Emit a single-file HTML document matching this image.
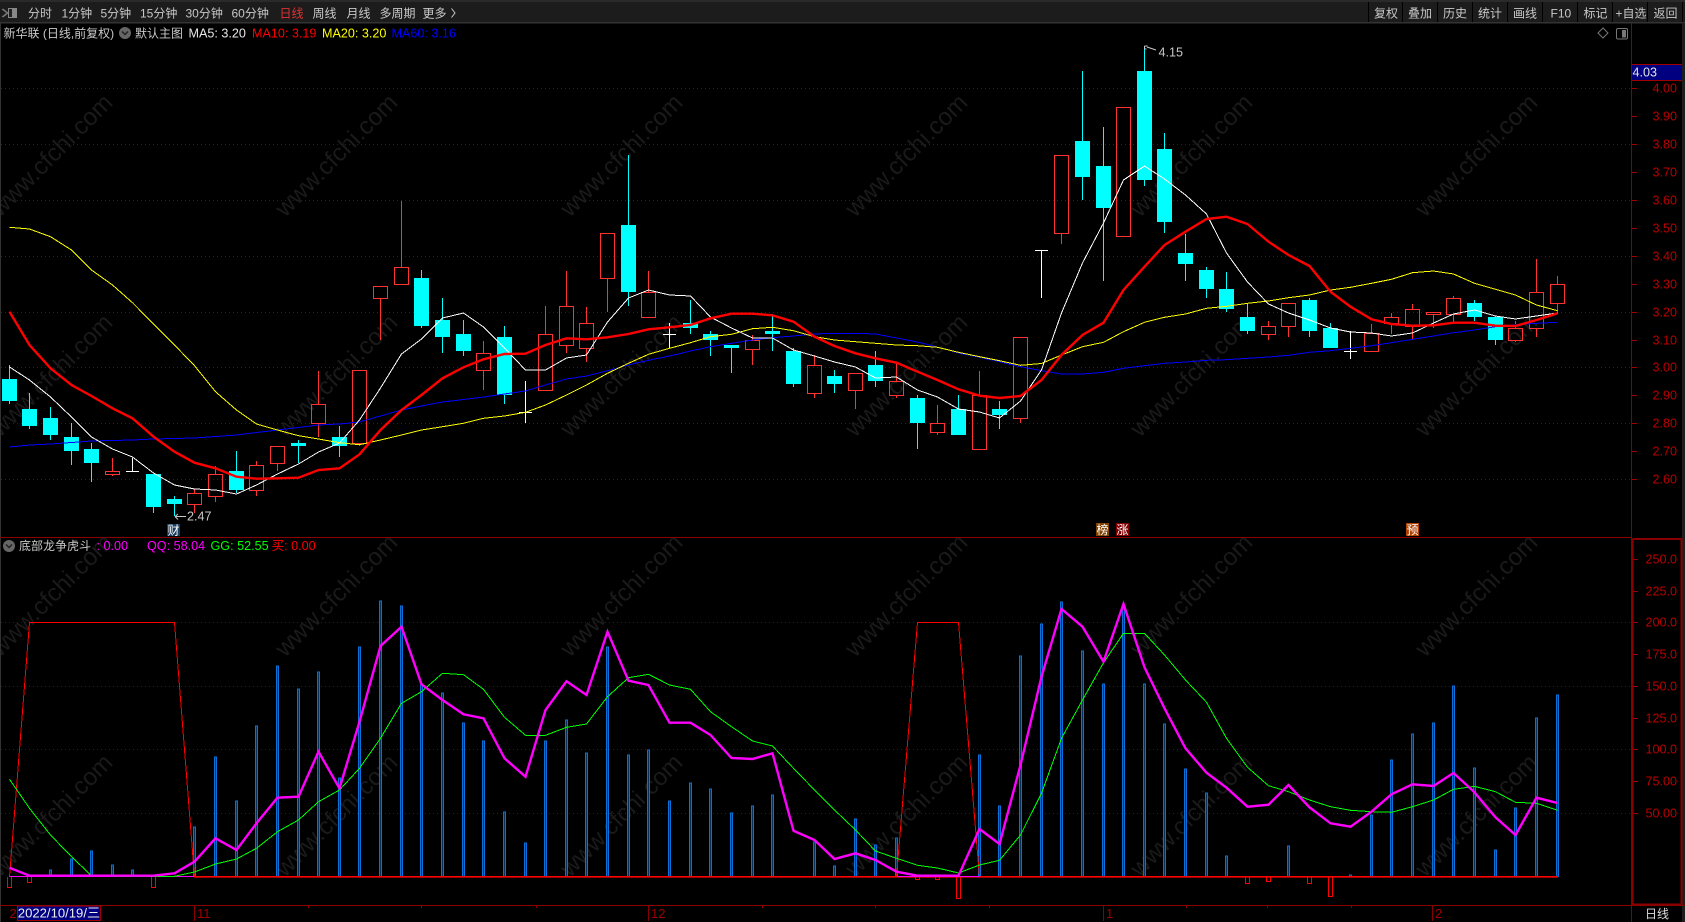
<!DOCTYPE html>
<html lang="zh"><head><meta charset="utf-8"><title>新华联</title>
<style>
html,body{margin:0;padding:0;background:#000;width:1685px;height:922px;overflow:hidden}
svg{display:block;position:absolute;left:0;top:0}
text{font-family:"Liberation Sans","Noto Sans CJK SC",sans-serif;font-size:12.6px;white-space:pre}
.t{fill:#c8c8c8;font-size:12px}
.p{fill:#b80000;font-size:12.6px;text-anchor:end}
.b{fill:#a00000;font-size:13px}
.wm text{fill:#1a1a1a;font-size:24.4px}
.g{stroke:#7a0000;stroke-width:1;stroke-dasharray:1 3;fill:none}
.c{shape-rendering:crispEdges;fill:none}
</style></head><body>
<svg width="1685" height="922" viewBox="0 0 1685 922" xmlns="http://www.w3.org/2000/svg">
<rect width="1685" height="922" fill="#000"/>
<!-- watermarks -->
<g class="wm">
<text transform="translate(0,218) rotate(-45)">www.cfchi.com</text><text transform="translate(285,218) rotate(-45)">www.cfchi.com</text><text transform="translate(570,218) rotate(-45)">www.cfchi.com</text><text transform="translate(855,218) rotate(-45)">www.cfchi.com</text><text transform="translate(1140,218) rotate(-45)">www.cfchi.com</text><text transform="translate(1425,218) rotate(-45)">www.cfchi.com</text>
<text transform="translate(0,438) rotate(-45)">www.cfchi.com</text><text transform="translate(285,438) rotate(-45)">www.cfchi.com</text><text transform="translate(570,438) rotate(-45)">www.cfchi.com</text><text transform="translate(855,438) rotate(-45)">www.cfchi.com</text><text transform="translate(1140,438) rotate(-45)">www.cfchi.com</text><text transform="translate(1425,438) rotate(-45)">www.cfchi.com</text>
<text transform="translate(0,658) rotate(-45)">www.cfchi.com</text><text transform="translate(285,658) rotate(-45)">www.cfchi.com</text><text transform="translate(570,658) rotate(-45)">www.cfchi.com</text><text transform="translate(855,658) rotate(-45)">www.cfchi.com</text><text transform="translate(1140,658) rotate(-45)">www.cfchi.com</text><text transform="translate(1425,658) rotate(-45)">www.cfchi.com</text>
<text transform="translate(0,878) rotate(-45)">www.cfchi.com</text><text transform="translate(285,878) rotate(-45)">www.cfchi.com</text><text transform="translate(570,878) rotate(-45)">www.cfchi.com</text><text transform="translate(855,878) rotate(-45)">www.cfchi.com</text><text transform="translate(1140,878) rotate(-45)">www.cfchi.com</text><text transform="translate(1425,878) rotate(-45)">www.cfchi.com</text>
</g>
<!-- grid -->
<path class="g" d="M1 88.5H1631M1 144.5H1631M1 200.5H1631M1 256.5H1631M1 312.5H1631M1 367.5H1631M1 423.5H1631M1 479.5H1631M1 622.5H1631M1 686.5H1631M1 749.5H1631M1 813.5H1631"/>
<!-- toolbar -->
<rect width="1685" height="23" fill="#1c1c1c"/>
<rect width="1685" height="2" fill="#2a2a2a"/>
<rect y="22" width="1685" height="1.5" fill="#333"/>
<rect x="0" y="23" width="1" height="899" fill="#333"/>
<rect x="1682" y="23" width="3" height="899" fill="#1e1e1e"/>
<path d="M2 9l5 4-5 4M3 9l5 4-5 4" stroke="#777" fill="none"/>
<rect x="8.5" y="8.5" width="8" height="9" fill="#222" stroke="#888"/><rect x="12" y="9" width="4" height="8" fill="#888"/>
<path d="M1368.5 2V22M1402.5 2V22M1437.5 2V22M1472.5 2V22M1507.5 2V22M1542.5 2V22M1577.5 2V22M1612.5 2V22M1647.5 2V22M1682.5 2V22" stroke="#000"/>
<text class="t" x="28" y="17.5">分时</text><text class="t" x="61.5" y="17.5">1分钟</text><text class="t" x="100.5" y="17.5">5分钟</text><text class="t" x="140" y="17.5">15分钟</text><text class="t" x="185.5" y="17.5">30分钟</text><text class="t" x="231.5" y="17.5">60分钟</text><text class="t" x="279.5" y="17.5" style="fill:#e03232">日线</text><text class="t" x="312.5" y="17.5">周线</text><text class="t" x="346.5" y="17.5">月线</text><text class="t" x="379.5" y="17.5">多周期</text><text class="t" x="422.5" y="17.5">更多</text>
<path d="M451.5 8.5l3.5 4.5-3.5 4.5" stroke="#c8c8c8" fill="none"/>
<text class="t" x="1374" y="17.5">复权</text><text class="t" x="1408" y="17.5">叠加</text><text class="t" x="1443" y="17.5">历史</text><text class="t" x="1478" y="17.5">统计</text><text class="t" x="1513" y="17.5">画线</text><text class="t" x="1550.5" y="17.5">F10</text><text class="t" x="1583.5" y="17.5">标记</text><text class="t" x="1615.5" y="17.5">+自选</text><text class="t" x="1653.5" y="17.5">返回</text>
<!-- info bar -->
<text class="t" x="3.5" y="37.5">新华联 (日线,前复权)</text>
<circle cx="125" cy="33" r="6" fill="#666"/><path d="M122 31.5l3 3 3-3" stroke="#222" stroke-width="1.5" fill="none"/>
<text class="t" x="135" y="37.5">默认主图</text>
<text x="188.5" y="37.5" fill="#e8e8e8">MA5: 3.20</text><text x="252" y="37.5" fill="#ff0000">MA10: 3.19</text><text x="322" y="37.5" fill="#ffff00">MA20: 3.20</text><text x="391.5" y="37.5" fill="#0000ff">MA60: 3.16</text>
<path d="M1603 28l5 5-5 5-5-5z" stroke="#777" fill="none"/>
<rect x="1616.5" y="28.5" width="11" height="10.5" rx="1.5" stroke="#777" fill="none"/><rect x="1622" y="30" width="4" height="7.5" fill="#777"/>
<!-- frame lines -->
<path d="M1631.5 23V922M0 537.5H1632M0 905.5H1685" stroke="#8a0000" fill="none"/>
<path d="M1632.5 539V904.5H1681.5V539H1632.5" stroke="#8a0000" stroke-width="2" fill="none"/>
<!-- price axis -->
<rect x="1632" y="64" width="50" height="16.5" fill="#000080"/><path d="M1632 64.5H1682M1632 80.5H1682" stroke="#a00000"/>
<text x="1632.5" y="76.5" fill="#e6e6e6" font-size="12.6">4.03</text>
<path d="M1632 88.5h5M1632 116.5h5M1632 144.5h5M1632 172.5h5M1632 200.5h5M1632 228.5h5M1632 256.5h5M1632 284.5h5M1632 312.5h5M1632 340.5h5M1632 367.5h5M1632 395.5h5M1632 423.5h5M1632 451.5h5M1632 479.5h5M1633 559.5h5M1633 591.5h5M1633 622.5h5M1633 654.5h5M1633 686.5h5M1633 718.5h5M1633 749.5h5M1633 781.5h5M1633 813.5h5" stroke="#a00000"/>
<g>
<text class="p" x="1677" y="92.5">4.00</text><text class="p" x="1677" y="120.5">3.90</text><text class="p" x="1677" y="148.5">3.80</text><text class="p" x="1677" y="176.5">3.70</text><text class="p" x="1677" y="204.5">3.60</text><text class="p" x="1677" y="232.5">3.50</text><text class="p" x="1677" y="260.5">3.40</text><text class="p" x="1677" y="288.5">3.30</text><text class="p" x="1677" y="316.5">3.20</text><text class="p" x="1677" y="344.5">3.10</text><text class="p" x="1677" y="371.5">3.00</text><text class="p" x="1677" y="399.5">2.90</text><text class="p" x="1677" y="427.5">2.80</text><text class="p" x="1677" y="455.5">2.70</text><text class="p" x="1677" y="483.5">2.60</text>
<text class="p" x="1677" y="563.5">250.0</text><text class="p" x="1677" y="595.5">225.0</text><text class="p" x="1677" y="626.5">200.0</text><text class="p" x="1677" y="658.5">175.0</text><text class="p" x="1677" y="690.5">150.0</text><text class="p" x="1677" y="722.5">125.0</text><text class="p" x="1677" y="753.5">100.0</text><text class="p" x="1677" y="785.5">75.00</text><text class="p" x="1677" y="817.5">50.00</text>
</g>
<!-- cyan wicks and bodies -->
<path stroke="#00ffff" fill="none" d="M9.5 365V404M29.5 393V429M50.5 407V440M71.5 423V465M91.5 443V482M153.5 474V513M174.5 496V516M236.5 451V493M298.5 440V463M339.5 426V457M421.5 270V328M442.5 298V353M463.5 320V356M504.5 326V404M628.5 155V306M690.5 300V334M710.5 331V356M731.5 345V373M772.5 314V351M793.5 348V387M834.5 370V393M875.5 351V387M917.5 395V449M958.5 395V435M999.5 401V429M1082.5 71V200M1103.5 127V281M1144.5 46V186M1164.5 133V233M1185.5 234V281M1206.5 267V298M1226.5 272V312M1247.5 303V334M1309.5 298V337M1330.5 323V348M1474.5 300V321M1495.5 316V345"/>
<path fill="#00ffff" d="M2 379h15V401h-15zM22 409h15V426h-15zM43 418h15V435h-15zM64 437h15V451h-15zM84 449h15V463h-15zM146 474h15V507h-15zM167 499h15V504h-15zM229 471h15V490h-15zM291 443h15V446h-15zM332 437h15V446h-15zM414 278h15V326h-15zM435 320h15V337h-15zM456 334h15V351h-15zM497 337h15V395h-15zM621 225h15V292h-15zM683 323h15V328h-15zM703 334h15V340h-15zM724 345h15V348h-15zM765 331h15V334h-15zM786 351h15V384h-15zM827 376h15V384h-15zM868 365h15V381h-15zM910 398h15V423h-15zM951 409h15V435h-15zM992 409h15V415h-15zM1075 141h15V177h-15zM1096 166h15V208h-15zM1137 71h15V180h-15zM1157 149h15V222h-15zM1178 253h15V264h-15zM1199 270h15V289h-15zM1219 289h15V309h-15zM1240 317h15V331h-15zM1302 300h15V331h-15zM1323 328h15V348h-15zM1467 303h15V317h-15zM1488 317h15V340h-15z"/>
<!-- red candles -->
<path stroke="#ff3232" fill="none" d="M112.5 458V471.5M112.5 474.5V476M105.5 471.5h14V474.5h-14zM194.5 489V493.5M194.5 504.5V513M187.5 493.5h14V504.5h-14zM215.5 466V474.5M215.5 496.5V502M208.5 474.5h14V496.5h-14zM256.5 461V465.5M256.5 490.5V496M249.5 465.5h14V490.5h-14zM277.5 463.5V471M270.5 446.5h14V463.5h-14zM318.5 371V404.5M318.5 423.5V437M311.5 404.5h14V423.5h-14zM359.5 443.5V446M352.5 370.5h14V443.5h-14zM380.5 298.5V340M373.5 286.5h14V298.5h-14zM401.5 201V267.5M394.5 267.5h14V284.5h-14zM483.5 341V353.5M483.5 370.5V390M476.5 353.5h14V370.5h-14zM545.5 306V334.5M538.5 334.5h14V390.5h-14zM566.5 271V306.5M566.5 345.5V353M559.5 306.5h14V345.5h-14zM586.5 307V323.5M586.5 348.5V362M579.5 323.5h14V348.5h-14zM607.5 278.5V312M600.5 233.5h14V278.5h-14zM648.5 271V292.5M641.5 292.5h14V317.5h-14zM752.5 335V340.5M752.5 349.5V365M745.5 340.5h14V349.5h-14zM814.5 355V365.5M814.5 393.5V398M807.5 365.5h14V393.5h-14zM855.5 390.5V409M848.5 373.5h14V390.5h-14zM896.5 364V381.5M896.5 395.5V398M889.5 381.5h14V395.5h-14zM937.5 405V423.5M937.5 432.5V435M930.5 423.5h14V432.5h-14zM979.5 371V395.5M972.5 395.5h14V449.5h-14zM1020.5 418.5V423M1013.5 337.5h14V418.5h-14zM1061.5 233.5V244M1054.5 155.5h14V233.5h-14zM1116.5 107.5h14V236.5h-14zM1268.5 321V326.5M1268.5 334.5V340M1261.5 326.5h14V334.5h-14zM1288.5 326.5V337M1281.5 303.5h14V326.5h-14zM1371.5 324V333.5M1364.5 333.5h14V351.5h-14zM1391.5 313V317.5M1391.5 323.5V334M1384.5 317.5h14V323.5h-14zM1412.5 304V309.5M1412.5 326.5V340M1405.5 309.5h14V326.5h-14zM1433.5 314.5V328M1426.5 312.5h14V314.5h-14zM1453.5 296V298.5M1453.5 314.5V323M1446.5 298.5h14V314.5h-14zM1515.5 321V328.5M1515.5 340.5V342M1508.5 328.5h14V340.5h-14zM1536.5 259V292.5M1536.5 328.5V337M1529.5 292.5h14V328.5h-14zM1557.5 276V284.5M1557.5 303.5V314M1550.5 284.5h14V303.5h-14z"/>
<!-- white doji -->
<path stroke="#fff" fill="none" d="M132.5 458V472M126 471.5h13M525.5 381V423M519 412.5h13M669.5 323V348M663 334.5h13M1041.5 250V298M1035 250.5h13M1350.5 331V359M1344 351.5h13"/>
<!-- MA lines -->
<polyline class="c" stroke="#0000ff" stroke-width="1" points="9.5,447 29.5,445 50.5,444 71.5,442.5 91.5,441 112.5,440.5 132.5,440 153.5,439 174.5,438.5 194.5,438 215.5,436.5 236.5,435 256.5,432.5 277.5,430 298.5,427.5 318.5,425 339.5,424 359.5,422 380.5,416 401.5,410 421.5,406 442.5,402 463.5,399.5 483.5,397 504.5,394 525.5,391 545.5,385 566.5,379 586.5,376 607.5,370.7 628.5,365 648.5,360.3 669.5,356 690.5,351 710.5,346.7 731.5,343.3 752.5,340 772.5,337.7 793.5,336 814.5,334 834.5,333.3 855.5,333.3 875.5,334 896.5,338 917.5,342 937.5,347 958.5,353 979.5,357.3 999.5,361.7 1020.5,366.7 1041.5,370.7 1061.5,374 1082.5,374 1103.5,372.3 1123.5,368.3 1144.5,365.7 1164.5,363.3 1185.5,362 1206.5,360.3 1226.5,359.7 1247.5,358.3 1268.5,357 1288.5,355.3 1309.5,352.3 1330.5,350.7 1350.5,348.3 1371.5,345.7 1391.5,342.7 1412.5,339.3 1433.5,336 1453.5,332.7 1474.5,330 1495.5,326.7 1515.5,324.7 1536.5,323.3 1557.5,322.3"/>
<polyline class="c" stroke="#ffff00" stroke-width="1" points="9.5,227.3 29.5,229 50.5,236.7 71.5,250 91.5,270 112.5,285 132.5,302.7 153.5,324 174.5,345 194.5,365.7 215.5,391.7 236.5,410 256.5,424 277.5,430 298.5,435.7 318.5,439 339.5,442.7 359.5,444.7 380.5,440 401.5,435 421.5,430 442.5,426.7 463.5,423.3 483.5,418.3 504.5,416 525.5,412.3 545.5,405 566.5,395 586.5,385 607.5,373.3 628.5,363.3 648.5,354.3 669.5,348.3 690.5,342.7 710.5,336.7 731.5,334.3 752.5,328.7 772.5,327.3 793.5,330.7 814.5,336.7 834.5,340 855.5,341.7 875.5,343.3 896.5,345 917.5,345.7 937.5,347.3 958.5,352.3 979.5,356.7 999.5,360.7 1020.5,365.3 1041.5,363.5 1061.5,355 1082.5,346.7 1103.5,342.3 1123.5,331.7 1144.5,322.3 1164.5,317.3 1185.5,314 1206.5,308.3 1226.5,306.3 1247.5,303.3 1268.5,301 1288.5,297.7 1309.5,295 1330.5,290 1350.5,287.3 1371.5,283.3 1391.5,279.3 1412.5,272.7 1433.5,271 1453.5,274 1474.5,283.3 1495.5,289.3 1515.5,295 1536.5,305 1557.5,310.7"/>
<polyline class="c" stroke="#ffffff" stroke-width="1" points="9.5,367 29.5,380 50.5,397 71.5,417 91.5,437 112.5,449 132.5,457 153.5,473 174.5,485 194.5,489 215.5,490 236.5,494 256.5,485 277.5,474 298.5,464 318.5,452 339.5,443 359.5,420 380.5,388 401.5,354 421.5,339 442.5,318 463.5,313 483.5,327 504.5,348 525.5,370 545.5,370 566.5,358 586.5,355 607.5,322 628.5,298 648.5,290 669.5,295 690.5,296 710.5,317 731.5,328 752.5,338 772.5,338 793.5,350 814.5,356 834.5,362 855.5,367 875.5,378 896.5,377 917.5,390 937.5,397 958.5,409 979.5,412 999.5,418 1020.5,401 1041.5,370 1061.5,313 1082.5,263 1103.5,223 1123.5,180 1144.5,166 1164.5,179 1185.5,195 1206.5,214 1226.5,253 1247.5,282 1268.5,304 1288.5,313 1309.5,320 1330.5,328 1350.5,332 1371.5,333 1391.5,336 1412.5,333 1433.5,323 1453.5,314 1474.5,310 1495.5,316 1515.5,319 1536.5,316 1557.5,313"/>
<polyline fill="none" stroke="#ff0000" stroke-width="2.4" points="9.5,311.7 29.5,345 50.5,368.3 71.5,385 91.5,396 112.5,408.3 132.5,418.3 153.5,436.7 174.5,451.7 194.5,462.7 215.5,468.3 236.5,476.7 256.5,478.7 277.5,478.3 298.5,477.7 318.5,470 339.5,468.3 359.5,454.3 380.5,430 401.5,410 421.5,395 442.5,378.3 463.5,367.3 483.5,359.3 504.5,354 525.5,353.7 545.5,345 566.5,338.3 586.5,339.3 607.5,337.3 628.5,334 648.5,329.3 669.5,327.3 690.5,325 710.5,318.3 731.5,313.7 752.5,313.7 772.5,315.3 793.5,321.7 814.5,336.7 834.5,346 855.5,353.3 875.5,358.3 896.5,362.7 917.5,371.7 937.5,380 958.5,389.3 979.5,395.7 999.5,398 1020.5,396 1041.5,380 1061.5,355 1082.5,335 1103.5,322.7 1123.5,290 1144.5,266.7 1164.5,245 1185.5,231.7 1206.5,219 1226.5,216.7 1247.5,224 1268.5,241.7 1288.5,255 1309.5,266 1330.5,291.7 1350.5,306.7 1371.5,319.3 1391.5,324 1412.5,325.7 1433.5,325.3 1453.5,322.7 1474.5,322.7 1495.5,325.7 1515.5,326 1536.5,320 1557.5,313.3"/>
<!-- high/low labels -->
<path d="M1147 47l9 3M1144.5 46h3M1144.5 46v3M1144.5 49h2" stroke="#c8c8c8" fill="none"/>
<text x="1158.5" y="56.5" fill="#c8c8c8">4.15</text>
<path d="M175 516.5h11M175 516.5l3-2.5M175 516.5l3 3" stroke="#c8c8c8" fill="none"/>
<text x="187" y="520.5" fill="#c8c8c8">2.47</text>
<rect x="167" y="524" width="13" height="12" fill="#1a3c5e"/><text x="167.5" y="534.5" fill="#fff" style="font-size:12px">财</text>
<rect x="1096" y="523" width="13" height="13" fill="#804000"/><text x="1096.5" y="534" fill="#fff" style="font-size:12px">榜</text>
<rect x="1116" y="523" width="13" height="13" fill="#800000"/><text x="1116.5" y="534" fill="#fff" style="font-size:12px">涨</text>
<rect x="1406" y="523" width="13" height="13" fill="#b04000"/><text x="1406.5" y="534" fill="#fff" style="font-size:12px">预</text>
<!-- sub legend -->
<circle cx="9" cy="546" r="6" fill="#666"/><path d="M6 544.5l3 3 3-3" stroke="#222" stroke-width="1.5" fill="none"/>
<text class="t" x="19" y="550">底部龙争虎斗</text>
<text x="96.5" y="550" fill="#ff00ff">: 0.00</text><text x="147" y="550" fill="#ff00ff">QQ: 58.04</text><text x="210.5" y="550" fill="#00ff00">GG: 52.55</text><text x="271.5" y="550" fill="#ff0000">买: 0.00</text>
<!-- sub bars -->
<path stroke="#0a70dc" fill="#04305e" d="M49.5 877V870h2V877M70.5 877V859h2V877M90.5 877V851h2V877M111.5 877V865h2V877M131.5 877V870h2V877M193.5 877V827h2V877M214.5 877V757h2V877M235.5 877V801h2V877M255.5 877V726h2V877M276.5 877V666h2V877M297.5 877V689h2V877M317.5 877V672h2V877M338.5 877V778h2V877M358.5 877V647h2V877M379.5 877V601h2V877M400.5 877V606h2V877M420.5 877V685h2V877M441.5 877V693h2V877M462.5 877V723h2V877M482.5 877V741h2V877M503.5 877V812h2V877M524.5 877V843h2V877M544.5 877V741h2V877M565.5 877V720h2V877M585.5 877V753h2V877M606.5 877V647h2V877M627.5 877V755h2V877M647.5 877V750h2V877M668.5 877V801h2V877M689.5 877V783h2V877M709.5 877V789h2V877M730.5 877V813h2V877M751.5 877V806h2V877M771.5 877V795h2V877M813.5 877V842h2V877M833.5 877V866h2V877M854.5 877V819h2V877M874.5 877V845h2V877M895.5 877V838h2V877M978.5 877V755h2V877M998.5 877V806h2V877M1019.5 877V656h2V877M1040.5 877V624h2V877M1060.5 877V602h2V877M1081.5 877V651h2V877M1102.5 877V684h2V877M1122.5 877V608h2V877M1143.5 877V684h2V877M1163.5 877V724h2V877M1184.5 877V769h2V877M1205.5 877V793h2V877M1225.5 877V856h2V877M1287.5 877V846h2V877M1349.5 877V875h2V877M1370.5 877V815h2V877M1390.5 877V760h2V877M1411.5 877V734h2V877M1432.5 877V723h2V877M1452.5 877V686h2V877M1473.5 877V768h2V877M1494.5 877V850h2V877M1514.5 877V808h2V877M1535.5 877V718h2V877M1556.5 877V695h2V877"/>
<!-- negative red bars -->
<path stroke="#ff0000" fill="none" d="M7.5 877V887.5h4V877M27.5 877V882.5h4V877M151.5 877V887.5h4V877M915.5 877V879.5h4V877M935.5 877V879.5h4V877M956.5 877V898.5h4V877M1245.5 877V883.5h4V877M1266.5 877V881.5h4V877M1307.5 877V883.5h4V877M1328.5 877V896.5h4V877"/>
<!-- buy trapezoids + baseline -->
<path class="c" stroke="#ff0000" stroke-width="1" d="M9.5 877L29.5 622.5H174.5L194.5 877M896.5 877L917.5 622.5H958.5L979.5 877"/>
<path stroke="#ff0000" fill="none" stroke-width="1.6" d="M194 876.8H1558"/>
<path stroke="#ff00ff" fill="none" d="M9 876.5H194M897 876.5H979"/>
<!-- GG -->
<polyline class="c" stroke="#00ff00" stroke-width="1" points="9.5,779.3 29.5,808.3 50.5,835 71.5,856.7 91.5,875.7 112.5,876.3 132.5,876.3 153.5,876.3 174.5,876.3 194.5,872 215.5,864 236.5,859 256.5,848.3 277.5,831.7 298.5,820 318.5,801.7 339.5,790 359.5,768.3 380.5,738.3 401.5,703.3 421.5,691.7 442.5,673.3 463.5,674.7 483.5,689.3 504.5,717.3 525.5,735.3 545.5,735.3 566.5,727.3 586.5,724 607.5,696.7 628.5,677.7 648.5,674.3 669.5,685 690.5,689.3 710.5,711.7 731.5,726.7 752.5,741 772.5,746 793.5,768.3 814.5,790 834.5,810 855.5,830 875.5,851 896.5,858.3 917.5,865.3 937.5,868 958.5,873 979.5,865 999.5,860.3 1020.5,835 1041.5,793.3 1061.5,738.3 1082.5,700 1103.5,662.7 1123.5,633.3 1144.5,633.3 1164.5,655 1185.5,680 1206.5,702.3 1226.5,738.3 1247.5,767.3 1268.5,785.7 1288.5,791.7 1309.5,800 1330.5,806.7 1350.5,810.3 1371.5,811.7 1391.5,812.3 1412.5,806.7 1433.5,800 1453.5,789.3 1474.5,786.3 1495.5,791.7 1515.5,802.3 1536.5,803.3 1557.5,810.3"/>
<!-- QQ -->
<polyline fill="none" stroke="#ff00ff" stroke-width="2.4" points="9.5,867.7 29.5,875.7 50.5,875.7 71.5,875.7 91.5,875.7 112.5,875.7 132.5,875.7 153.5,875.7 174.5,873.3 194.5,861.7 215.5,838.3 236.5,850 256.5,823.3 277.5,797.7 298.5,796.7 318.5,751.7 339.5,788.3 359.5,721.7 380.5,646 401.5,626.7 421.5,684.3 442.5,700 463.5,714.3 483.5,718.3 504.5,758.3 525.5,776.7 545.5,710 566.5,681.3 586.5,695 607.5,631.7 628.5,680.7 648.5,685 669.5,722.7 690.5,722.7 710.5,735 731.5,758 752.5,759 772.5,753.3 793.5,830.7 814.5,840 834.5,859 855.5,853.3 875.5,860 896.5,871.7 917.5,875.7 937.5,875.7 958.5,875.7 979.5,829 999.5,844 1020.5,765 1041.5,676.7 1061.5,609 1082.5,626.7 1103.5,661.7 1123.5,604 1144.5,667.3 1164.5,708.3 1185.5,748.3 1206.5,772.7 1226.5,787.7 1247.5,806.7 1268.5,804.7 1288.5,785 1309.5,807.3 1330.5,823.3 1350.5,826.7 1371.5,811.7 1391.5,794.3 1412.5,784.3 1433.5,786 1453.5,773 1474.5,792.3 1495.5,817.3 1515.5,835 1536.5,797.7 1557.5,803"/>
<!-- bottom axis -->
<path stroke="#8a0000" fill="none" d="M194.5 905V921M648.5 905V921M1103.5 905V921M1432.5 905V921M308.5 905v3M421.5 905v3M536.5 905v3M762.5 905v3M875.5 905v3M989.5 905v3M1186.5 905v3M1267.5 905v3M1351.5 905v3"/>
<text class="b" x="9.5" y="918">2</text><text class="b" x="197" y="918">11</text><text class="b" x="651" y="918">12</text><text class="b" x="1106" y="918">1</text><text class="b" x="1435" y="918">2</text>
<rect x="17.5" y="906" width="83" height="14.5" fill="#000080" stroke="#a00000"/>
<text x="17.8" y="917.5" fill="#eee" style="font-size:13.1px">2022/10/19/三</text>
<text class="t" x="1645" y="918" style="fill:#ddd">日线</text>
</svg>
</body></html>
